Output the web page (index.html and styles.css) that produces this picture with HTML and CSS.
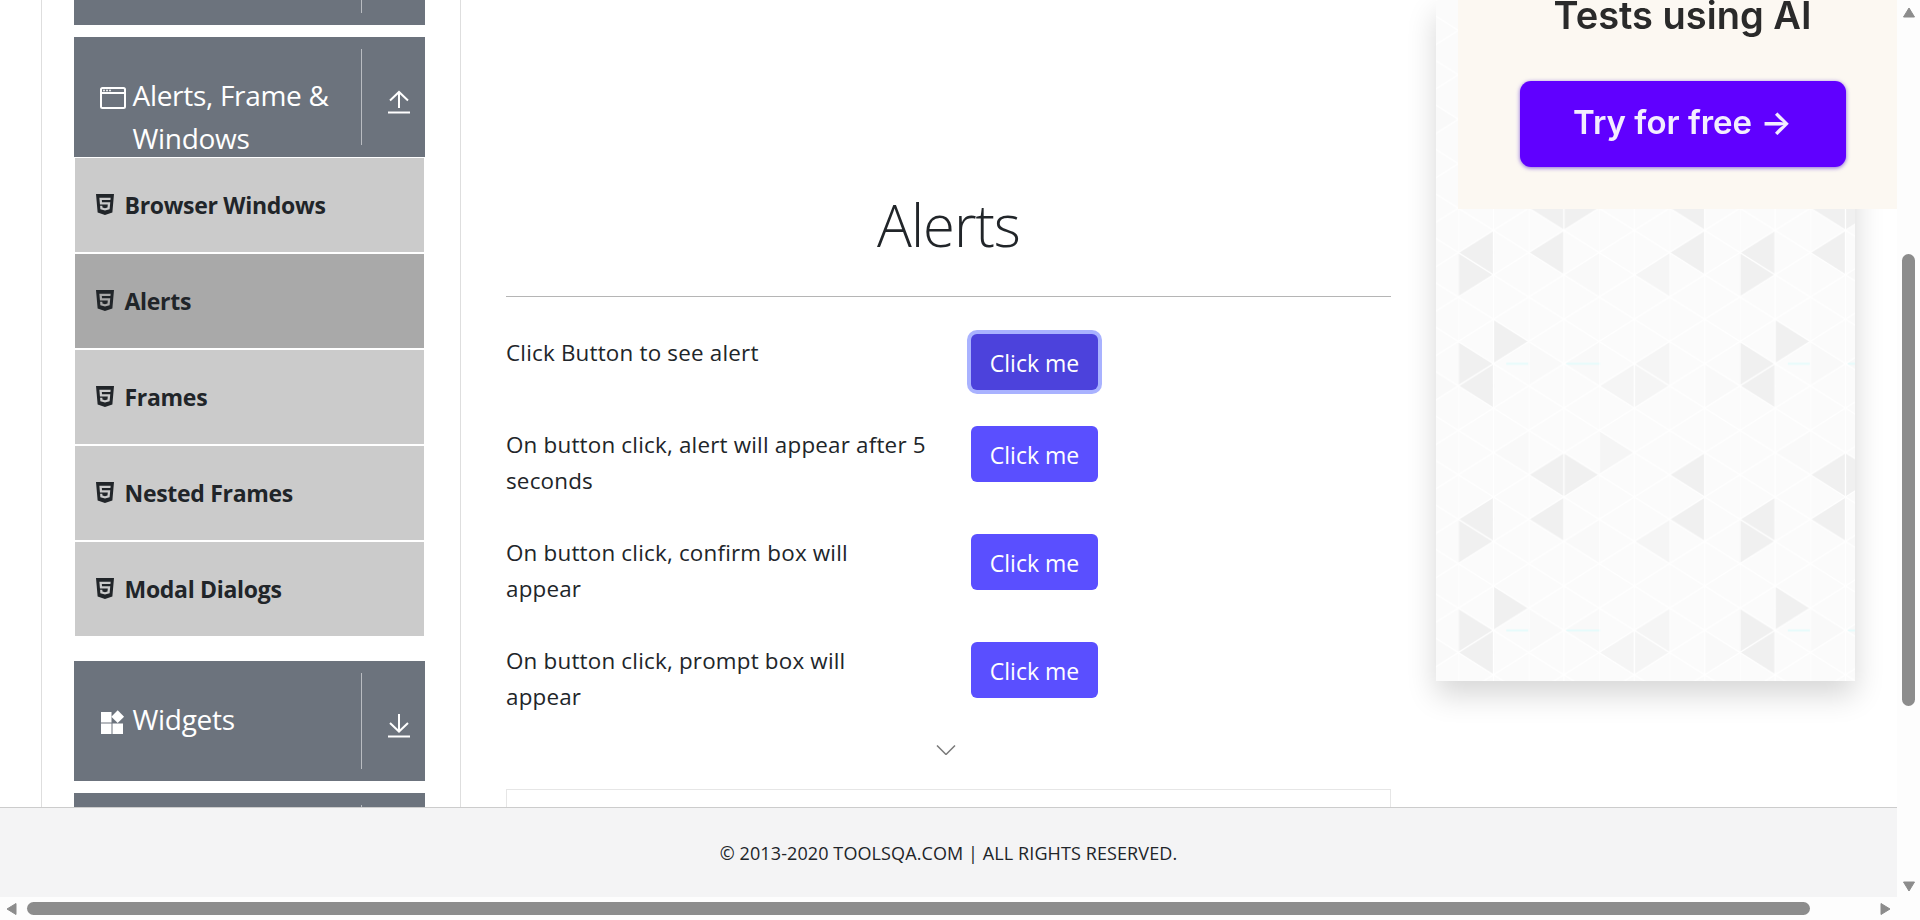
FILE: index.html
```html
<!DOCTYPE html>
<html lang="en">
<head>
<meta charset="utf-8">
<title>Alerts</title>
<link rel="stylesheet" href="styles.css">
</head>
<body>
<div class="shell">
  <div class="view">
    <div class="content">
      <aside class="sidebar">
        <div class="bar bar-cut-top"><div class="bar-title"></div><div class="bar-rule"></div><div class="bar-action"></div></div>
        <div class="bar bar-open">
          <div class="bar-title">
            <svg class="bar-icon" viewBox="0 0 26 22"><rect x="1" y="1" width="24" height="20" rx="1.5" class="line"/><path d="M1 6h24" class="line"/><circle cx="4" cy="3.5" r=".9" class="fill"/><circle cx="7" cy="3.5" r=".9" class="fill"/><circle cx="10" cy="3.5" r=".9" class="fill"/></svg>
            <span class="bar-text">Alerts, Frame &amp; Windows</span>
          </div>
          <div class="bar-rule"></div>
          <div class="bar-action">
            <svg class="arrow" viewBox="0 0 22 24"><path d="M11 2v16M2 10.5 11 2l9 8.5" class="line"/><path d="M0 22.500h22" class="line"/></svg>
          </div>
        </div>
        <ul class="submenu">
          <li class="sub"><svg class="h5" viewBox="0 32 384 448"><path d="M0 32l34.900 395.800L191.500 480l157.600-52.200L384 32H0zm308.200 127.900H124.400l4.100 49.400h175.600l-13.600 148.400-97.900 27v.3h-1.100l-98.700-27.300-6-75.800h47.700L138 320l53.500 14.500 53.700-14.500 6-62.200H84.300L71.500 112.200h241.100l-4.400 47.700z"/></svg><span>Browser Windows</span></li>
          <li class="sub sub-active"><svg class="h5" viewBox="0 32 384 448"><path d="M0 32l34.900 395.800L191.500 480l157.600-52.200L384 32H0zm308.200 127.900H124.400l4.100 49.400h175.600l-13.600 148.400-97.900 27v.3h-1.100l-98.700-27.300-6-75.800h47.700L138 320l53.500 14.500 53.700-14.500 6-62.200H84.300L71.500 112.200h241.100l-4.400 47.700z"/></svg><span>Alerts</span></li>
          <li class="sub"><svg class="h5" viewBox="0 32 384 448"><path d="M0 32l34.900 395.800L191.500 480l157.600-52.200L384 32H0zm308.200 127.900H124.400l4.100 49.400h175.600l-13.600 148.400-97.900 27v.3h-1.100l-98.700-27.300-6-75.800h47.700L138 320l53.500 14.500 53.700-14.500 6-62.200H84.300L71.500 112.200h241.100l-4.400 47.700z"/></svg><span>Frames</span></li>
          <li class="sub"><svg class="h5" viewBox="0 32 384 448"><path d="M0 32l34.900 395.800L191.500 480l157.600-52.200L384 32H0zm308.200 127.900H124.400l4.100 49.400h175.600l-13.600 148.400-97.900 27v.3h-1.100l-98.700-27.300-6-75.800h47.700L138 320l53.500 14.500 53.700-14.500 6-62.200H84.300L71.500 112.200h241.100l-4.400 47.700z"/></svg><span>Nested Frames</span></li>
          <li class="sub"><svg class="h5" viewBox="0 32 384 448"><path d="M0 32l34.900 395.800L191.500 480l157.600-52.200L384 32H0zm308.200 127.900H124.400l4.100 49.400h175.600l-13.600 148.400-97.900 27v.3h-1.100l-98.700-27.300-6-75.800h47.700L138 320l53.500 14.500 53.700-14.500 6-62.200H84.300L71.500 112.200h241.100l-4.400 47.700z"/></svg><span>Modal Dialogs</span></li>
        </ul>
        <div class="bar">
          <div class="bar-title">
            <svg class="bar-icon" viewBox="0 0 26 24"><rect x="1" y="2" width="10.500" height="10.500" class="fill"/><rect x="1" y="13.500" width="10.500" height="10.500" class="fill"/><rect x="12.500" y="13.500" width="10.500" height="10.500" class="fill"/><rect x="13.200" y="2.200" width="9" height="9" transform="rotate(45 17.700 6.700)" class="fill"/></svg>
            <span class="bar-text">Widgets</span>
          </div>
          <div class="bar-rule"></div>
          <div class="bar-action">
            <svg class="arrow" viewBox="0 0 22 24"><path d="M11 0v17M2 9l9 8.500L20 9" class="line"/><path d="M0 22.500h22" class="line"/></svg>
          </div>
        </div>
        <div class="bar"><div class="bar-title"></div><div class="bar-rule"></div><div class="bar-action"></div></div>
      </aside>

      <main class="main">
        <h1 class="title">Alerts</h1>
        <hr class="title-rule">
        <div class="row">
          <p class="row-text">Click Button to see alert</p>
          <button class="btn btn-focus">Click me</button>
        </div>
        <div class="row">
          <p class="row-text">On button click, alert will appear after 5<br>seconds</p>
          <button class="btn">Click me</button>
        </div>
        <div class="row">
          <p class="row-text">On button click, confirm box will<br>appear</p>
          <button class="btn">Click me</button>
        </div>
        <div class="row">
          <p class="row-text">On button click, prompt box will<br>appear</p>
          <button class="btn">Click me</button>
        </div>
        <div class="chevron-wrap">
          <svg class="chevron" viewBox="0 0 20 10"><path d="M1 .5 10 9.500 19 .5"/></svg>
        </div>
        <div class="ad-box"></div>
      </main>

      <div class="ad-panel">
        <svg class="pattern" viewBox="0 0 419 681" preserveAspectRatio="none">
          <defs>
            <pattern id="tris" x="22.300" y="52.600" width="281.600" height="266.700" patternUnits="userSpaceOnUse">
              <polygon class="t-d" points="35.200,0 35.200,44.400 70.400,22.200"/>
              <polygon class="t-d" points="0,22.200 0,66.700 35.200,44.400"/>
              <polygon class="t-d" points="35.200,44.400 35.200,88.900 0,66.700"/>
              <polygon class="t-d" points="105.600,133.300 105.600,177.800 70.400,155.500"/>
              <polygon class="t-d" points="105.600,133.300 105.600,177.800 140.800,155.500"/>
              <polygon class="t-m" points="140.800,111.100 140.800,155.500 176,133.300"/>
              <polygon class="t-m" points="176,44.400 176,88.900 140.800,66.700"/>
              <polygon class="t-m" points="176,44.400 176,88.900 211.200,66.700"/>
              <polygon class="t-d" points="246.400,133.300 246.400,177.800 211.200,155.500"/>
              <polygon class="t-d" points="246.400,177.800 246.400,222.200 211.200,200"/>
              <polygon class="t-d" points="35.200,177.800 35.200,222.200 0,200"/>
              <polygon class="t-d" points="0,200 0,244.400 35.200,222.200"/>
              <polygon class="t-d" points="105.600,177.800 105.600,222.200 70.400,200"/>
              <polygon class="t-m" points="211.200,200 211.200,244.400 176,222.200"/>
              <polygon class="t-m" points="211.200,22.200 211.200,66.700 176,44.400"/>
              <polygon class="t-l" points="70.400,22.200 70.400,66.700 105.600,44.400"/>
              <polygon class="t-l" points="140.800,22.200 140.800,66.700 105.600,44.400"/>
              <polygon class="t-l" points="70.400,111.100 70.400,155.500 35.200,133.300"/>
              <polygon class="t-l" points="246.400,44.400 246.400,88.900 281.600,66.700"/>
              <polygon class="t-l" points="140.800,200 140.800,244.400 105.600,222.200"/>
              <path class="t-c" d="M48 44.400h22M108 44.400h34"/>
            </pattern>
            <pattern id="grid" x="22.300" y="52.600" width="70.400" height="44.440" patternUnits="userSpaceOnUse">
              <path class="g" d="M0 0v44.440M35.200 0v44.440M0 22.220 35.200 0M0 22.220 35.200 44.440M35.200 0 70.400 22.220M35.200 44.440 70.400 22.220"/>
            </pattern>
          </defs>
          <rect class="p-base" width="419" height="681"/>
          <rect fill="url(#tris)" width="419" height="681"/>
          <rect fill="url(#grid)" width="419" height="681"/>
        </svg>
        <div class="ad-card">
          <div class="ad-heading">Tests using AI</div>
          <div class="ad-cta">Try for free →</div>
        </div>
      </div>
    </div>
    <footer class="footer">© 2013-2020 TOOLSQA.COM | ALL RIGHTS RESERVED.</footer>
    <div class="hbar">
      <svg class="sb-arrow" viewBox="0 0 11 14"><path d="M10 1.500v11L1 7z"/></svg>
      <div class="hthumb"></div>
      <svg class="sb-arrow" viewBox="0 0 11 14"><path d="M1 1.500v11L10 7z"/></svg>
    </div>
  </div>
  <div class="vbar">
    <svg class="sb-arrow-v" viewBox="0 0 14 11"><path d="M1.500 10h11L7 1z"/></svg>
    <div class="vthumb"></div>
    <svg class="sb-arrow-v" viewBox="0 0 14 11"><path d="M1.500 1h11L7 10z"/></svg>
  </div>
</div>
</body>
</html>
```
FILE: styles.css
```css
* { box-sizing: border-box; }
html, body { margin: 0; padding: 0; height: 100%; overflow: hidden; }
body { font-family: "Open Sans", "Noto Sans", sans-serif; color: #212529; background: #fff; }

.shell { display: flex; width: 1920px; height: 920px; }
.view { width: 1897px; display: flex; flex-direction: column; }
.content { height: 807px; display: flex; overflow: hidden; position: relative; flex: none; }

/* sidebar */
.sidebar {
  flex: none; width: 420px; margin-left: 41px; height: 807px; overflow: hidden;
  padding: 0 35px 0 31.500px;
  border-left: 1.5px solid #dedede; border-right: 1.5px solid #dedede;
}
.bar { display: flex; height: 120px; background: #6c737d; color: #fff; margin-bottom: 12px; overflow: hidden; flex: none; }
.bar-open { margin-bottom: 0; }
.bar-cut-top { height: 25px; align-items: flex-start; }
.bar-cut-top .bar-rule { height: 13px; margin: 0; }
.bar-title { width: 287px; padding: 37px 0 0 26px; display: flex; align-items: flex-start; flex: none; }
.bar-text { font-size: 28px; line-height: 43px; letter-spacing: -.3px; margin-left: 7px; width: 240px; font-weight: 400; }
.bar-icon { width: 26px; height: 24px; flex: none; margin-top: 12px; }
.bar-rule { width: 1px; background: #b9bcc1; height: 96px; margin: 12px 0; flex: none; }
.bar-action { flex: 1; display: flex; padding: 53px 0 0 26px; }
.arrow { width: 22px; height: 24px; flex: none; }
.line { fill: none; stroke: #fff; stroke-width: 2; }
.fill { fill: #fff; }

.submenu { list-style: none; margin: 1px 0 25px; padding: 0; }
.sub {
  display: flex; align-items: center; height: 94px; margin: 0 1px 2px; background: #cbcbcb;
  font-size: 23px; font-weight: 700; letter-spacing: -.3px; padding-left: 21px;
}
.sub:last-child { margin-bottom: 0; }
.sub-active { background: #a9a9a9; }
.h5 { width: 18px; height: 21px; fill: #212529; margin-right: 11px; flex: none; margin-top: -2px; }

/* main */
.main { flex: none; width: 885px; margin-left: 45px; }
.title {
  margin: 0; padding-top: 183px; height: 296px; text-align: center;
  font-size: 58px; font-weight: 300; line-height: 84px; letter-spacing: -1px;
}
.title-rule { margin: 0 0 37px; border: 0; border-top: 1.5px solid #b5b5b5; height: 0; }
.row { display: grid; grid-template-columns: 465px auto; justify-content: start; align-items: start; margin-bottom: 36px; }
.row-text { margin: 0 0 -1px; padding-top: 1px; font-size: 22.400px; line-height: 36px; letter-spacing: .2px; }
.btn {
  width: 127px; height: 56px; border: 0; border-radius: 6px; background: #5a4fff; color: #fff;
  font: 400 23px/1 "Open Sans", sans-serif; letter-spacing: 0; padding: 2px 0 0;
}
.btn-focus { background: #4c42dc; box-shadow: 0 0 0 4px #a9b2ff; }
.chevron-wrap { display: flex; justify-content: center; height: 45px; margin-top: -6px; padding-right: 6px; padding-top: 1px; }
.chevron { width: 20px; height: 10px; }
.chevron path { fill: none; stroke: #7a7a7a; stroke-width: 1.500; }
.ad-box { height: 60px; border: 1.5px solid #e6e6e6; }

/* ad */
.ad-panel { flex: none; width: 419px; height: 681px; margin-left: 45px; box-shadow: 0 14px 28px rgba(0,0,0,.16); }
.pattern { display: block; width: 419px; height: 681px; filter: blur(.6px); }
.p-base { fill: #fbfbfb; }
.t-d { fill: #f0f0f0; }
.t-m { fill: #f5f5f5; }
.t-l { fill: #f9f9f9; }
.t-c { stroke: #e6fbfb; stroke-width: 2; fill: none; }
.g { stroke: #fff; stroke-width: 1.200; fill: none; }
.ad-card {
  position: absolute; top: 0; left: 1458px; width: 439px; height: 209px; background: #fcf8f2; overflow: hidden;
  display: flex; flex-direction: column; align-items: center; justify-content: flex-end; padding: 0 0 42px 10px;
  font-family: Inter, sans-serif;
}
.ad-heading { font-size: 38px; font-weight: 600; color: #2a2a2a; line-height: 44px; margin-bottom: 44px; white-space: nowrap; filter: blur(.6px); }
.ad-cta {
  width: 326px; height: 86px; border-radius: 11px; background: #6000ff; color: #f3edff; flex: none;
  display: flex; align-items: center; justify-content: center; font-size: 33px; font-weight: 600; padding-bottom: 4px;
  box-shadow: 0 1px 4px rgba(60,0,200,.6); filter: blur(.6px);
}

/* footer */
.footer {
  height: 90px; flex: none; background: #f4f4f5; border-top: 1.5px solid #ccc; text-align: center;
  font-size: 18px; line-height: 90px; letter-spacing: .1px; color: #212529;
}

/* scrollbars */
.hbar { height: 23px; flex: none; background: #fdfdfd; display: flex; align-items: center; padding: 0 6px; }
.hthumb { width: 1783px; height: 13px; border-radius: 7px; background: #8c8c8c; margin: 0 70px 0 10px; flex: none; }
.sb-arrow { width: 11px; height: 14px; fill: #8c8c8c; stroke: #8c8c8c; stroke-width: 1; stroke-linejoin: round; flex: none; }
.vbar { width: 23px; flex: none; background: #fdfdfd; display: flex; flex-direction: column; align-items: center; padding-top: 7px; }
.vthumb { width: 13px; height: 452px; border-radius: 7px; background: #8c8c8c; margin: 236px 0 175px; flex: none; }
.sb-arrow-v { width: 14px; height: 11px; fill: #8c8c8c; stroke: #8c8c8c; stroke-width: 1; stroke-linejoin: round; flex: none; }
```
